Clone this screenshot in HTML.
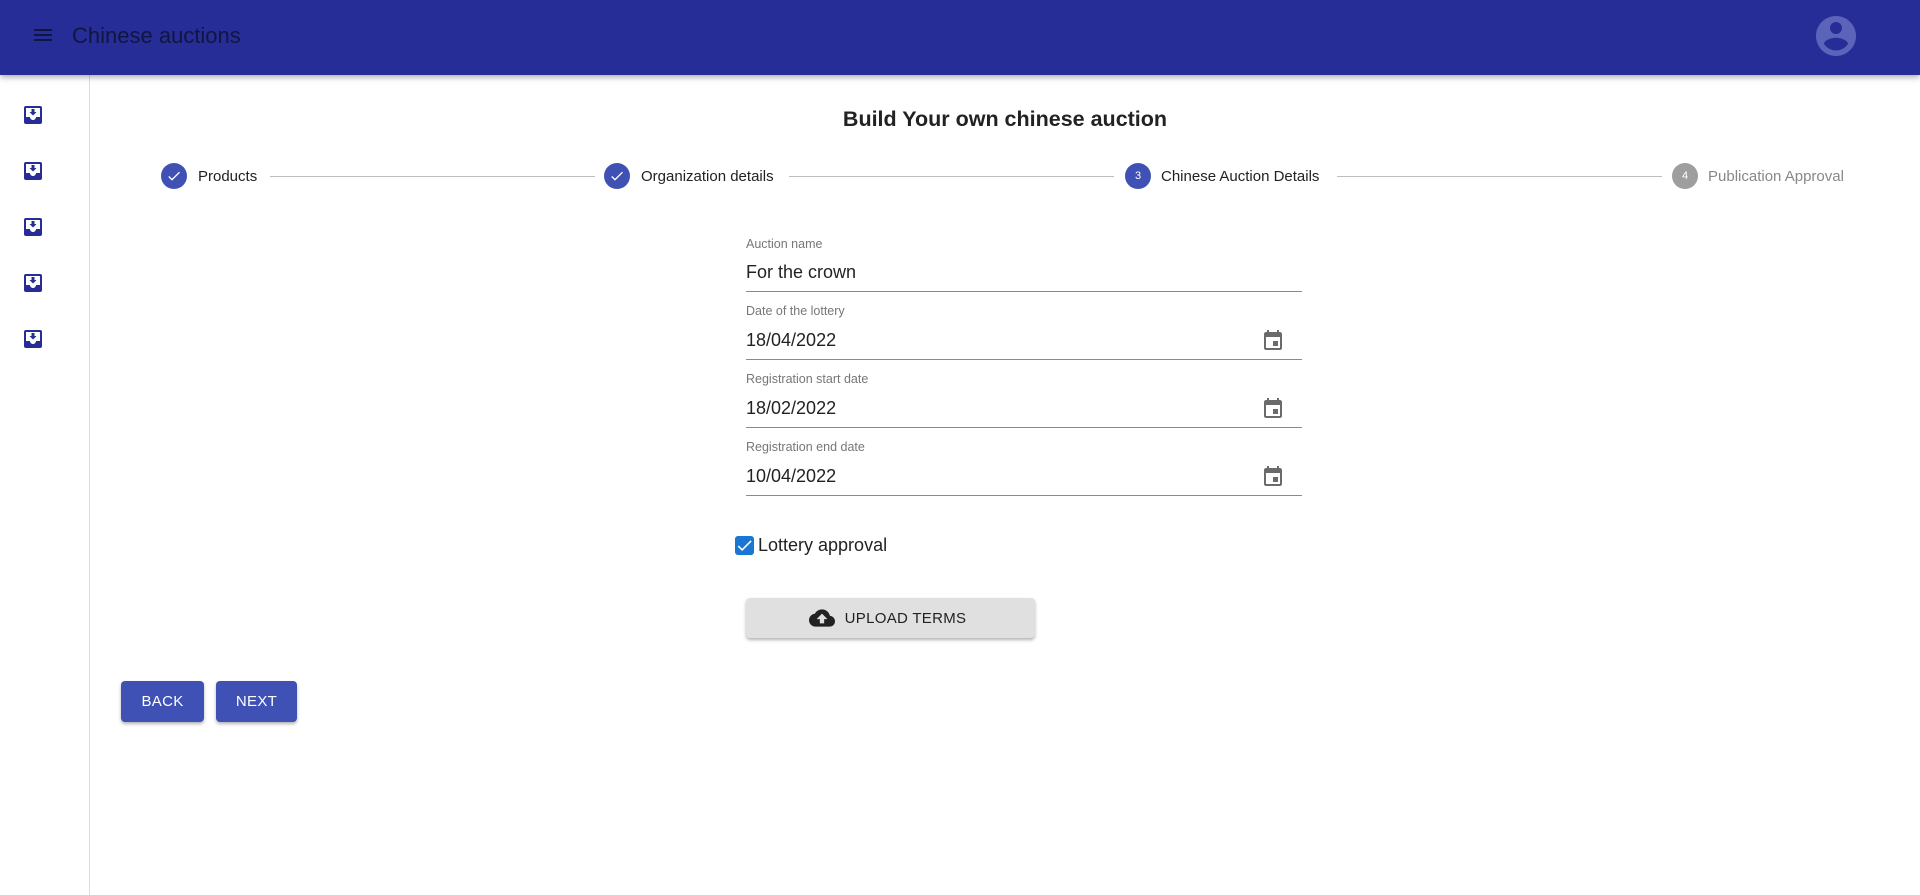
<!DOCTYPE html>
<html><head><meta charset="utf-8"><style>
*{box-sizing:border-box;margin:0;padding:0}
body{width:1920px;height:895px;overflow:hidden;background:#fff;font-family:"Liberation Sans",Arial,sans-serif;position:relative}
.a{position:absolute}
.bar{left:0;top:0;width:1920px;height:75px;background:#262d96;box-shadow:0 2px 6px rgba(0,0,0,.35);z-index:2}
.side{left:0;top:75px;width:90px;height:820px;border-right:1px solid #ddd}
.circ{width:26px;height:26px;border-radius:50%;background:#3f51b5;color:#fff;font-size:11px;display:flex;align-items:center;justify-content:center}
.lbl{font-size:15px;color:#222;top:168px}
.line{height:1px;background:#bdbdbd;top:176px}
.fl{left:746px;font-size:12.5px;color:#777}
.fv{left:746px;font-size:18px;color:#222}
.ul{left:746px;width:556px;height:1px;background:#8a8a8a}
.btn{background:#3f51b5;color:#fff;font-size:15px;border-radius:4px;display:flex;align-items:center;justify-content:center;box-shadow:0 2px 3px rgba(0,0,0,.3);letter-spacing:.3px}
</style></head><body>
<div class="a bar">
  <svg class="a" style="left:31px;top:23px" width="24" height="24" viewBox="0 0 24 24"><path d="M3 18h18v-2H3v2zm0-5h18v-2H3v2zm0-7v2h18V6H3z" fill="#111640"/></svg>
  <div class="a" style="left:72px;top:23px;font-size:22px;color:#111640">Chinese auctions</div>
  <svg class="a" style="left:1812px;top:12px" width="48" height="48" viewBox="0 0 24 24"><path d="M12 2C6.48 2 2 6.48 2 12s4.48 10 10 10 10-4.48 10-10S17.52 2 12 2zm0 3c1.66 0 3 1.34 3 3s-1.34 3-3 3-3-1.34-3-3 1.34-3 3-3zm0 14.2c-2.5 0-4.710-1.28-6-3.22.03-1.99 4-3.08 6-3.08 1.99 0 5.97 1.09 6 3.08-1.29 1.940-3.5 3.22-6 3.22z" fill="#5c64ba"/></svg>
</div>
<div class="a side"></div>
<svg width="0" height="0" style="position:absolute"><defs><symbol id="ib" viewBox="0 0 24 24"><rect x="3" y="3" width="18" height="18" rx="2" fill="#262d96"/><rect x="5" y="5" width="14" height="9" fill="#fff"/><path d="M5 14h4c0 1.66 1.34 3 3 3s3-1.34 3-3h4" fill="#fff"/><path d="M10.5 6h3v3h2l-3.5 3.5L8.5 9h2z" fill="#262d96"/></symbol></defs></svg>
<svg class="a" style="left:21px;top:103px" width="24" height="24"><use href="#ib"/></svg>
<svg class="a" style="left:21px;top:159px" width="24" height="24"><use href="#ib"/></svg>
<svg class="a" style="left:21px;top:215px" width="24" height="24"><use href="#ib"/></svg>
<svg class="a" style="left:21px;top:271px" width="24" height="24"><use href="#ib"/></svg>
<svg class="a" style="left:21px;top:327px" width="24" height="24"><use href="#ib"/></svg>

<div class="a" style="left:90px;width:1830px;top:107px;text-align:center;font-size:21.5px;font-weight:bold;color:#222">Build Your own chinese auction</div>

<div class="a circ" style="left:161px;top:163px"><svg width="16" height="16" viewBox="0 0 24 24"><path d="M9 16.17 4.83 12l-1.42 1.41L9 19 21 7l-1.41-1.41z" fill="#fff"/></svg></div>
<div class="a lbl" style="left:198px">Products</div>
<div class="a line" style="left:270px;width:325px"></div>
<div class="a circ" style="left:604px;top:163px"><svg width="16" height="16" viewBox="0 0 24 24"><path d="M9 16.17 4.83 12l-1.42 1.41L9 19 21 7l-1.41-1.41z" fill="#fff"/></svg></div>
<div class="a lbl" style="left:641px">Organization details</div>
<div class="a line" style="left:789px;width:325px"></div>
<div class="a circ" style="left:1125px;top:163px">3</div>
<div class="a lbl" style="left:1161px">Chinese Auction Details</div>
<div class="a line" style="left:1337px;width:325px"></div>
<div class="a circ" style="left:1672px;top:163px;background:#9e9e9e">4</div>
<div class="a lbl" style="left:1708px;color:#888">Publication Approval</div>

<div class="a fl" style="top:237px">Auction name</div>
<div class="a fv" style="top:262px">For the crown</div>
<div class="a ul" style="top:291px"></div>

<div class="a fl" style="top:304px">Date of the lottery</div>
<div class="a fv" style="top:330px">18/04/2022</div>
<div class="a ul" style="top:359px"></div>
<div class="a fl" style="top:372px">Registration start date</div>
<div class="a fv" style="top:398px">18/02/2022</div>
<div class="a ul" style="top:427px"></div>
<div class="a fl" style="top:440px">Registration end date</div>
<div class="a fv" style="top:466px">10/04/2022</div>
<div class="a ul" style="top:495px"></div>
<svg class="a" style="left:1261px;top:329px" width="24" height="24" viewBox="0 0 24 24"><path d="M17 12h-5v5h5v-5zM16 1v2H8V1H6v2H5c-1.11 0-2 .9-2 2v14c0 1.1.89 2 2 2h14c1.1 0 2-.9 2-2V5c0-1.1-.9-2-2-2h-1V1h-2zm3 18H5V8h14v11z" fill="#6b6b6b"/></svg>
<svg class="a" style="left:1261px;top:397px" width="24" height="24" viewBox="0 0 24 24"><path d="M17 12h-5v5h5v-5zM16 1v2H8V1H6v2H5c-1.11 0-2 .9-2 2v14c0 1.1.89 2 2 2h14c1.1 0 2-.9 2-2V5c0-1.1-.9-2-2-2h-1V1h-2zm3 18H5V8h14v11z" fill="#6b6b6b"/></svg>
<svg class="a" style="left:1261px;top:465px" width="24" height="24" viewBox="0 0 24 24"><path d="M17 12h-5v5h5v-5zM16 1v2H8V1H6v2H5c-1.11 0-2 .9-2 2v14c0 1.1.89 2 2 2h14c1.1 0 2-.9 2-2V5c0-1.1-.9-2-2-2h-1V1h-2zm3 18H5V8h14v11z" fill="#6b6b6b"/></svg>

<div class="a" style="left:735px;top:536px;width:19px;height:19px;border-radius:3px;background:#1976d2"><svg width="19" height="19" viewBox="0 0 24 24"><path d="M9 16.17 4.83 12l-1.42 1.41L9 19 21 7l-1.41-1.41z" fill="#fff"/></svg></div>
<div class="a" style="left:758px;top:535px;font-size:18px;color:#222">Lottery approval</div>

<div class="a btn" style="left:746px;top:598px;width:289px;height:40px;background:#e0e0e0;color:#222;font-size:15px;padding-right:6px">
<svg width="26" height="26" viewBox="0 0 24 24" style="margin-right:10px"><path d="M19.35 10.04C18.67 6.59 15.64 4 12 4 9.11 4 6.6 5.64 5.35 8.04 2.34 8.36 0 10.91 0 14c0 3.31 2.69 6 6 6h13c2.76 0 5-2.24 5-5 0-2.64-2.05-4.78-4.650-4.96zM14 13v4h-4v-4H7l5-5 5 5h-3z" fill="#222"/></svg>UPLOAD TERMS</div>

<div class="a btn" style="left:121px;top:681px;width:83px;height:41px">BACK</div>
<div class="a btn" style="left:216px;top:681px;width:81px;height:41px">NEXT</div>
</body></html>
